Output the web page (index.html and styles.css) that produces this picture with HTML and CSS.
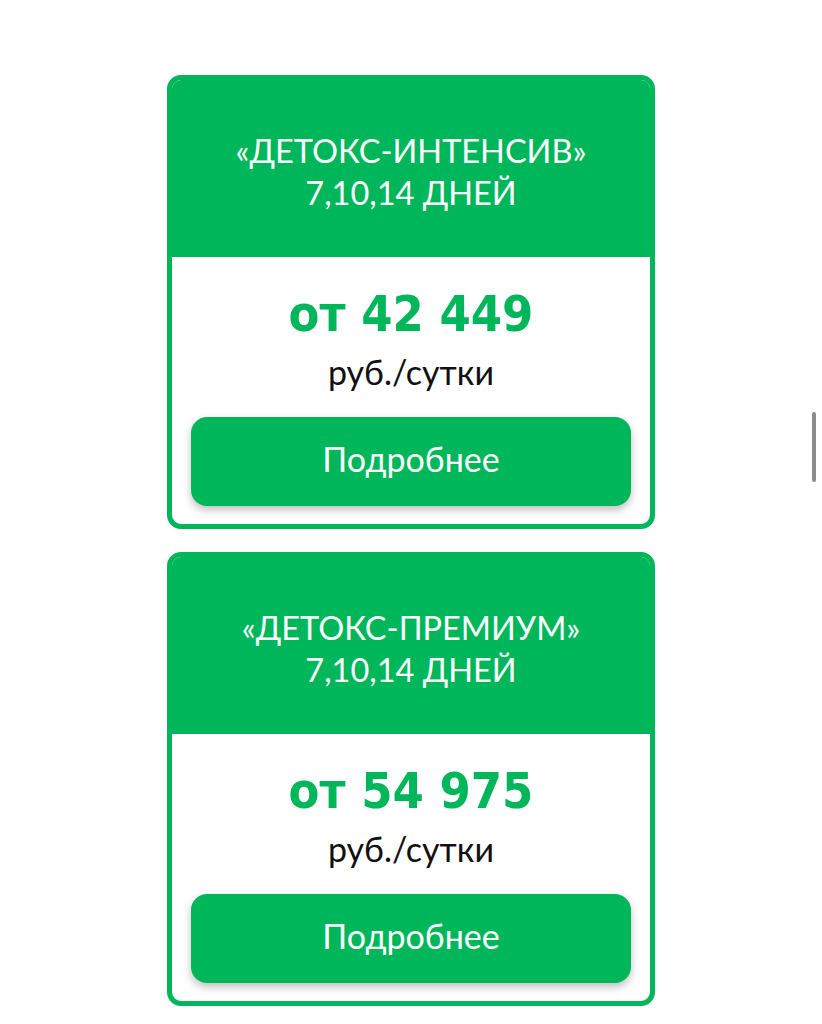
FILE: index.html
```html
<!DOCTYPE html>
<html>
<head>
    <title>Детокс программы</title>
    <link rel="stylesheet" href="styles.css">
</head>
<body>
    <div class="list">
        <div class="card">
            <div class="card-head">
                <div class="card-title">«ДЕТОКС-ИНТЕНСИВ»</div>
                <div class="card-title">7,10,14 ДНЕЙ</div>
            </div>
            <div class="card-body">
                <div class="price">от 42 449</div>
                <div class="unit">руб./сутки</div>
                <button class="more-button">Подробнее</button>
            </div>
        </div>
        <div class="card">
            <div class="card-head">
                <div class="card-title">«ДЕТОКС-ПРЕМИУМ»</div>
                <div class="card-title">7,10,14 ДНЕЙ</div>
            </div>
            <div class="card-body">
                <div class="price">от 54 975</div>
                <div class="unit">руб./сутки</div>
                <button class="more-button">Подробнее</button>
            </div>
        </div>
    </div>
    <div class="scroll-thumb"></div>
</body>
</html>
```

FILE: styles.css
```css
body {
    margin: 0;
    font-family: Lato, "Noto Sans", sans-serif;
    background-color: #fff;
}
.list {
    display: flex;
    flex-direction: column;
    align-items: center;
    gap: 23px;
    padding-top: 75px;
}
.card {
    width: 478px;
    border: 5px solid #00b65b;
    border-radius: 14px;
    overflow: hidden;
    background-color: #fff;
}
.card-head {
    background-color: #00b65b;
    padding: 50px 10px 43px;
    text-align: center;
}
.card-title {
    color: #fbfffc;
    font-size: 32.5px;
    line-height: 42px;
}
.card-body {
    display: flex;
    flex-direction: column;
    align-items: center;
    padding: 28px 19px 18px;
}
.price {
    color: #00b65b;
    font-family: "DejaVu Sans Condensed", "DejaVu Sans", sans-serif;
    font-stretch: condensed;
    font-size: 50px;
    font-weight: bold;
    line-height: 58px;
}
.unit {
    margin-top: 9px;
    color: #111;
    font-size: 34px;
    line-height: 40px;
}
.more-button {
    margin-top: 25px;
    width: 100%;
    height: 89px;
    padding: 0 0 6px;
    border: none;
    border-radius: 16px;
    background-color: #00b65b;
    color: #fbfffc;
    font-family: inherit;
    font-size: 34px;
    box-shadow: 0 4px 8px rgba(0, 0, 0, 0.25);
    cursor: pointer;
}
.scroll-thumb {
    position: fixed;
    top: 412px;
    right: 6px;
    width: 4px;
    height: 70px;
    border-radius: 2px;
    background-color: #8c8c8c;
}
```
